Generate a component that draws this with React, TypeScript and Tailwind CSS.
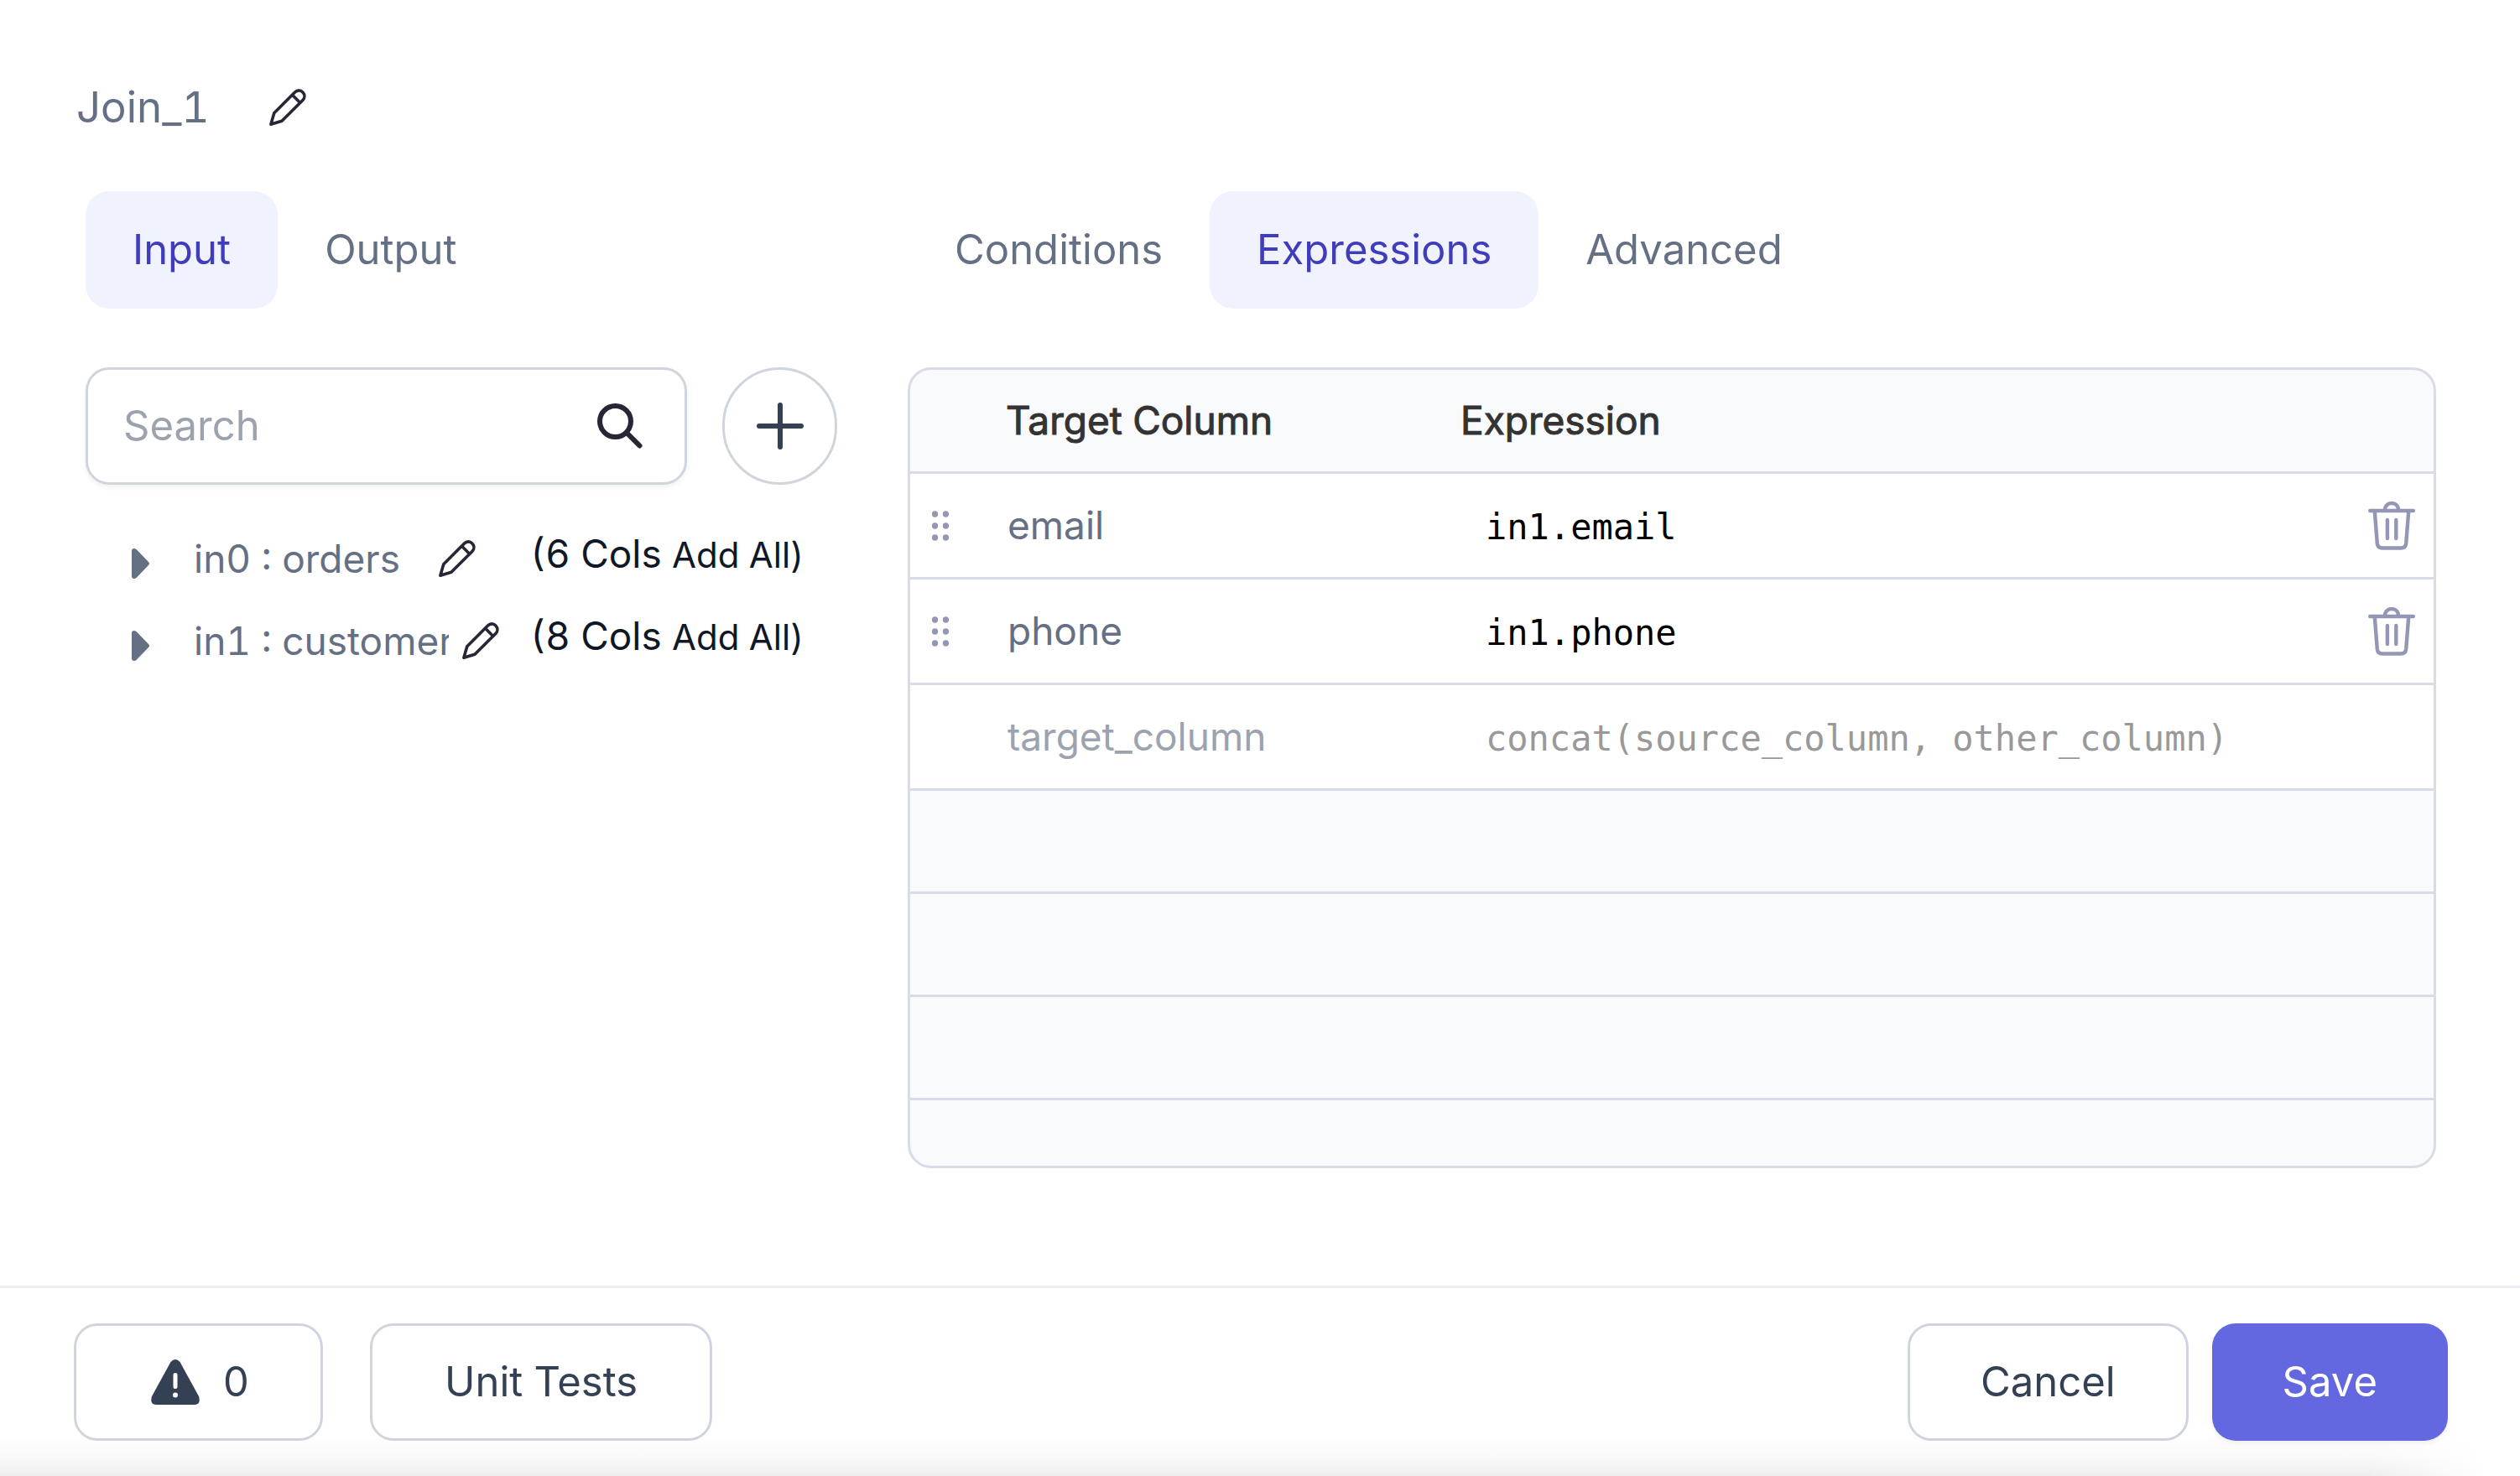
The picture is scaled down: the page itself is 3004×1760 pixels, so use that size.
import React from "react";

function Pencil() {
  return (
    <svg viewBox="0 0 44 44" className="size-11 shrink-0" fill="none" stroke="#272636" strokeWidth="3.6" strokeLinejoin="round" strokeLinecap="round" aria-hidden="true">
      <path d="M1.900 42.200 5.800 28.800 30.500 4C33.200 1.200 37.300 1.200 39.900 3.900S42.600 10.700 39.900 13.400L15 38.300Z" />
      <path d="M27.800 7.500 36.500 16.200" />
    </svg>
  );
}

function Trash() {
  return (
    <svg viewBox="0 0 56 58" className="h-[58px] w-14" fill="none" stroke="#9396B4" strokeWidth="4.400" strokeLinecap="round" strokeLinejoin="round" aria-hidden="true">
      <path d="M2.200 11H53.800" />
      <path d="M20 10C20 -.6 36 -.6 36 10" />
      <path d="M7.800 12 10.800 50Q11.400 55.500 17 55.500H39Q44.600 55.500 45.200 50L48.200 12" />
      <path d="M22.900 22V44M33.300 22V44" />
    </svg>
  );
}

function Grip() {
  return (
    <svg viewBox="0 0 20 36" className="h-9 w-5" fill="#9396B4" aria-hidden="true">
      {[4, 18, 32].map((y) => (
        <React.Fragment key={y}>
          <circle cx="3.500" cy={y} r="3.700" />
          <circle cx="16.500" cy={y} r="3.700" />
        </React.Fragment>
      ))}
    </svg>
  );
}

function Tab({ label, active }: { label: string; active?: boolean }) {
  return (
    <button
      role="tab"
      aria-selected={!!active}
      className={
        active
          ? "h-[140px] rounded-[28px] bg-[#F0F2FE] px-14 text-[49px] text-[#403DBD]"
          : "h-[140px] rounded-[28px] px-14 text-[49px] text-[#667085]"
      }
    >
      {label}
    </button>
  );
}

const sources = [
  { id: "in0", name: "in0 : orders", cols: 6 },
  { id: "in1", name: "in1 : customers", cols: 8 },
];

const rows = [
  { target: "email", expression: "in1.email" },
  { target: "phone", expression: "in1.phone" },
];

const line = "border-b-[3px] border-[#D9DBE7]";
const heading = " font-normal [-webkit-text-stroke:1px_#333333]";
const outline = "h-[140px] rounded-[28px] border-[3px] border-[#D0D5DD] bg-white text-[49px] text-[#344054]";

export default function App() {
  return (
    <div className="flex min-h-screen flex-col bg-white font-['Inter',sans-serif] text-[#667085] tabular-nums">
      <header className="flex items-center gap-[71px] px-[91px] pt-24">
        <h1 className="text-[51px] leading-[64px]">Join_1</h1>
        <button aria-label="Rename Join_1"><Pencil /></button>
      </header>

      <main className="flex grow gap-[84px] pt-[68px] pr-[100px] pl-[102px]">
        <section className="w-[896px] shrink-0">
          <div role="tablist" className="flex">
            <Tab label="Input" active />
            <Tab label="Output" />
          </div>
          <div className="mt-[70px] flex gap-[42px]">
            <label className="flex h-[140px] grow items-center rounded-[28px] border-[3px] border-[#D0D5DD] pr-[50px] pl-[42px] shadow-[0_3px_6px_rgba(16,24,40,0.06)]">
              <input aria-label="Search" placeholder="Search" className="w-0 grow text-[49px] outline-none placeholder:text-[#9CA3AF]" />
              <svg viewBox="0 0 54 54" className="size-[54px]" fill="none" stroke="#272636" strokeWidth="6" strokeLinecap="round" aria-hidden="true">
                <circle cx="21.500" cy="21.500" r="18.500" />
                <path d="M35 35 50.500 50.500" />
              </svg>
            </label>
            <button aria-label="Add input" className="flex h-[140px] w-[137px] items-center justify-center rounded-full border-[3px] border-[#D0D5DD]">
              <svg viewBox="0 0 56 56" className="size-14" stroke="#344054" strokeWidth="6" strokeLinecap="round" aria-hidden="true">
                <path d="M28 3V53M3 28H53" />
              </svg>
            </button>
          </div>
          <ul className="mt-[39px]">
            {sources.map((s) => (
              <li key={s.id} className="flex h-[98px] items-center pl-[55px]">
                <button aria-label={"Expand " + s.id} className="mt-3">
                  <svg viewBox="0 0 21 36" className="h-9 w-[21px]" fill="#667085" aria-hidden="true">
                    <path d="M0 3Q0 0 3 0 4.500 0 6 1.500L20 16Q22 18 20 20L6 34.500Q4.500 36 3 36 0 36 0 33Z" />
                  </svg>
                </button>
                <div className="ml-[53px] flex w-[401px] items-center gap-4">
                  <span className="max-w-[304px] overflow-hidden text-[46px] leading-[60px] whitespace-nowrap">{s.name}</span>
                  <button aria-label={"Rename " + s.id} className={s.id === "in0" ? "ml-[30px]" : ""}><Pencil /></button>
                </div>
                <button className="mb-[11px] text-[46px] leading-[60px] whitespace-nowrap text-[#101828]">
                  ({s.cols} Cols <span className="text-[42px]">Add All)</span>
                </button>
              </li>
            ))}
          </ul>
        </section>

        <section className="min-w-0 grow">
          <div role="tablist" className="flex">
            <Tab label="Conditions" />
            <Tab label="Expressions" active />
            <Tab label="Advanced" />
          </div>
          <div className="mt-[70px] h-[955px] overflow-hidden rounded-[28px] border-[3px] border-[#D9DBE7] bg-[#F9FAFC]">
            <table className="w-full table-fixed border-separate border-spacing-0 text-left">
              <colgroup>
                <col className="w-[112px]" />
                <col className="w-[544px]" />
                <col />
                <col className="w-[120px]" />
              </colgroup>
              <thead>
                <tr className="h-[124px] text-[46px] text-[#333333]">
                  <th className={line} />
                  <th className={line + heading + " pl-[2px]"}>Target Column</th>
                  <th className={line + heading}>Expression</th>
                  <th className={line} />
                </tr>
              </thead>
              <tbody>
                {rows.map((r) => (
                  <tr key={r.target} className="h-[126px] bg-white">
                    <td className={line + " pl-[26px]"}><button aria-label={"Move " + r.target} className="block"><Grip /></button></td>
                    <td className={line + " pl-1 text-[46px]"}>{r.target}</td>
                    <td className={line + " pt-1 pl-[30px] font-['DejaVu_Sans_Mono',monospace] text-[42px] text-black"}>{r.expression}</td>
                    <td className={line + " pl-[42px]"}><button aria-label={"Delete " + r.target} className="block"><Trash /></button></td>
                  </tr>
                ))}
                <tr className="h-[126px] bg-white">
                  <td className={line} />
                  <td className={line + " pl-1"}><input aria-label="Target column" placeholder="target_column" className="w-full text-[46px] outline-none placeholder:text-[#9CA3AF]" /></td>
                  <td className={line + " pt-1 pl-[30px]"}><input aria-label="Expression" placeholder="concat(source_column, other_column)" className="w-full font-['DejaVu_Sans_Mono',monospace] text-[42px] outline-none placeholder:text-[#999999]" /></td>
                  <td className={line} />
                </tr>
                {[0, 1, 2].map((i) => (
                  <tr key={i} className="h-[123px]"><td colSpan={4} className={line} /></tr>
                ))}
              </tbody>
            </table>
          </div>
        </section>
      </main>

      <footer className="flex h-[227px] items-start border-t-[3px] border-[#ECECF3] bg-[linear-gradient(to_left,#FFFFFF_40px,transparent_180px),linear-gradient(to_top,#EEEEEE,#FAFAFA_25px,#FFFFFF_52px)] pt-[42px] pr-[86px] pl-[88px]">
        <button className={outline + " flex w-[297px] items-center justify-center gap-7 pl-1"}>
          <svg viewBox="0 0 58 54" className="h-[54px] w-[58px]" aria-hidden="true">
            <path fill="#344054" d="M23.500 3Q29 -3 34.500 3L57 44Q60 54 51 54H7Q-2 54 1 44Z" />
            <path stroke="white" strokeWidth="5" strokeLinecap="round" d="M29 18.500V32.500" />
            <circle cx="29" cy="42.500" r="3" fill="white" />
          </svg>
          0
        </button>
        <button className={outline + " ml-14 px-[86px]"}>Unit Tests</button>
        <button className={outline + " ml-auto px-[84px]"}>Cancel</button>
        <button className="ml-7 h-[140px] rounded-[28px] bg-[#6468E0] px-[84px] text-[49px] text-white shadow-[0_3px_6px_rgba(16,24,40,0.06)]">Save</button>
      </footer>
    </div>
  );
}
